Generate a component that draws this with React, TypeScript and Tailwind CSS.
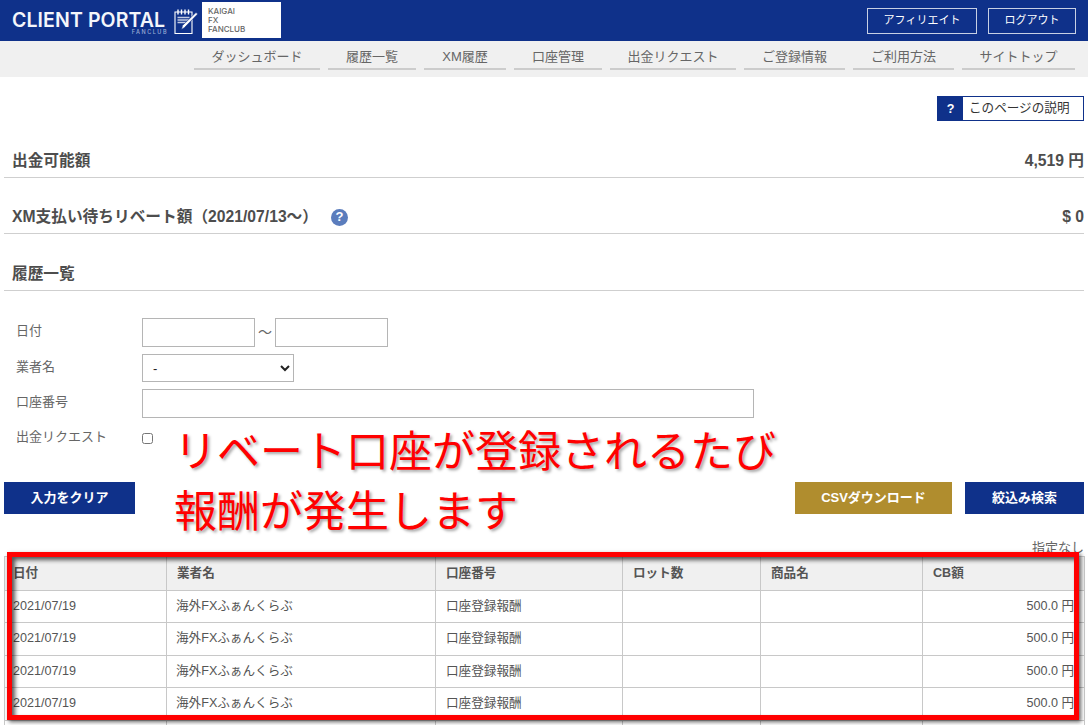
const navItems = [
  { label: 'ダッシュボード', width: 'w-[126px]' },
  { label: '履歴一覧', width: 'w-[88px]' },
  { label: 'XM履歴', width: 'w-[82px]' },
  { label: '口座管理', width: 'w-[88px]' },
  { label: '出金リクエスト', width: 'w-[126px]' },
  { label: 'ご登録情報', width: 'w-[101px]' },
  { label: 'ご利用方法', width: 'w-[101px]' },
  { label: 'サイトトップ', width: 'w-[113px]' },
];

const rows = [0, 1, 2, 3, 4];
const rowHeights = ['h-[32px]', 'h-[33px]', 'h-[32px]', 'h-[33px]', 'h-[33px]'];

const NotebookIcon = () => (
  <svg width="26" height="28" viewBox="0 0 26 28" fill="none" stroke="white" strokeWidth="1.1">
    <path d="M2 5h17v21.5H2z" />
    <path d="M5 2.5v5M8.5 2.5v5M12 2.5v5M15.5 2.5v5" strokeWidth="1.4" />
    <path d="M4.5 10.5h12M4.5 13h12M4.5 15.5h9" strokeWidth="1.4" opacity="0.75" />
    <path d="M8.5 22.5l1-4L23 5.5l1.7 1.5L11.5 20.5z" fill="white" stroke="#0f318a" strokeWidth="0.6" />
  </svg>
);

const Section = ({ title, value, help }: { title: string; value?: string; help?: boolean }) => (
  <div className="flex h-[42px] items-end justify-between border-b border-[#cfcfcf] pb-[5px] pl-2 text-[15.7px] font-bold leading-[22px] text-[#4d4d4d]">
    <div className="flex items-center">
      <span>{title}</span>
      {help && (
        <span className="ml-[13px] flex h-[17px] w-[17px] items-center justify-center rounded-full bg-[#5b7dbd] text-[13px] font-bold text-white">
          ?
        </span>
      )}
    </div>
    {value && <span>{value}</span>}
  </div>
);

export default function App() {
  return (
    <div className="relative h-[725px] w-[1088px] overflow-hidden bg-white font-['Liberation_Sans','Noto_Sans_CJK_JP',sans-serif] text-[#555]">
      <header className="flex h-[41px] items-center bg-[#0f318a] pl-3 pr-3">
        <div className="relative w-[160px] font-['Inter',sans-serif] text-[19.5px] font-semibold leading-none tracking-[0.1px] text-[#f4f6fb]">
          CLIENT PORTAL
          <span className="absolute right-[4px] top-[19px] text-[5.5px] font-medium tracking-[1.5px] text-[#9fb0d8]">FANCLUB</span>
        </div>
        <div className="ml-[1px]">
          <NotebookIcon />
        </div>
        <div className="ml-[3px] mt-[-1px] flex h-[36px] w-[79px] flex-col justify-center bg-white pl-[6px] font-['Inter',sans-serif] text-[8px] font-medium leading-[9px] text-[#666]">
          <span>KAIGAI</span>
          <span>FX</span>
          <span>FANCLUB</span>
        </div>
        <div className="ml-auto flex gap-[11px]">
          <button className="h-[26px] w-[110px] border border-[#c8d0e4] text-[11px] text-white">アフィリエイト</button>
          <button className="h-[26px] w-[88px] border border-[#c8d0e4] text-[11px] text-white">ログアウト</button>
        </div>
      </header>

      <nav className="flex h-[36px] justify-end gap-[8px] bg-[#f0f0f0] pr-[13px]">
        {navItems.map((item) => (
          <a key={item.label} className={`${item.width} mt-[1px] h-[28px] border-b-[2px] border-[#cccccc] text-center text-[13px] leading-[30px] text-[#666]`}>
            {item.label}
          </a>
        ))}
      </nav>

      <main className="px-1">
        <div className="flex justify-end pt-[19px]">
          <a className="flex h-[25px] w-[147px] items-center border border-[#0f318a] text-[12.6px] leading-[20px] text-[#333]">
            <span className="flex h-full w-[25px] items-center justify-center bg-[#0f318a] font-bold text-white">?</span>
            <span className="ml-[6px] mb-[2px]">このページの説明</span>
          </a>
        </div>

        <div className="mt-[15px]">
          <Section title="出金可能額" value="4,519 円" />
        </div>
        <div className="mt-[14px]">
          <Section title="XM支払い待ちリベート額（2021/07/13～）" value="$ 0" help />
        </div>
        <div className="mt-[15px]">
          <Section title="履歴一覧" />
        </div>

        <form className="mt-[27px] text-[13px] text-[#666]">
          <div className="flex h-[29px] items-center">
            <label className="mb-[3px] w-[138px] pl-3">日付</label>
            <input className="h-[29px] w-[113px] border border-[#b5b5b5]" />
            <span className="w-[20px] text-center text-[14px]">～</span>
            <input className="h-[29px] w-[113px] border border-[#b5b5b5]" />
          </div>
          <div className="mt-[7px] flex h-[28px] items-center">
            <label className="mb-[2px] w-[138px] pl-3">業者名</label>
            <select className="h-[28px] w-[152px] border border-[#b5b5b5] bg-white pl-[6px] text-[13px] text-[#222]">
              <option>-</option>
            </select>
          </div>
          <div className="mt-[7px] flex h-[29px] items-center">
            <label className="mb-[3px] w-[138px] pl-3">口座番号</label>
            <input className="h-[29px] w-[612px] border border-[#b5b5b5]" />
          </div>
          <div className="mt-[15px] flex h-[11px] items-center">
            <label className="mb-[3px] w-[138px] pl-3">出金リクエスト</label>
            <input type="checkbox" className="m-0 h-[11px] w-[11px]" />
          </div>
        </form>

        <div className="mt-[38px] flex h-[32px] text-[13px] font-bold text-white">
          <button className="w-[131px] bg-[#0f318a]">入力をクリア</button>
          <button className="ml-auto w-[157px] bg-[#b08d2e]">CSVダウンロード</button>
          <button className="ml-[13px] w-[119px] bg-[#0f318a]">絞込み検索</button>
        </div>

        <div className="mt-[26px] h-[16px] text-right text-[13px] leading-[16px] text-[#666]">指定なし</div>

        <table className="w-[1080px] table-fixed border-collapse text-[12.6px] text-[#555]">
          <colgroup>
            <col className="w-[162px]" />
            <col className="w-[269px]" />
            <col className="w-[187px]" />
            <col className="w-[138px]" />
            <col className="w-[162px]" />
            <col className="w-[162px]" />
          </colgroup>
          <thead>
            <tr className="h-[34px] bg-[#f0f0f0] font-bold">
              <th className="border border-[#c8c8c8] pb-[1px] pl-[8px] text-left">日付</th>
              <th className="border border-[#c8c8c8] pb-[1px] pl-[10px] text-left">業者名</th>
              <th className="border border-[#c8c8c8] pb-[1px] pl-[10px] text-left">口座番号</th>
              <th className="border border-[#c8c8c8] pb-[1px] pl-[10px] text-left">ロット数</th>
              <th className="border border-[#c8c8c8] pb-[1px] pl-[10px] text-left">商品名</th>
              <th className="border border-[#c8c8c8] pb-[1px] pl-[10px] text-left">CB額</th>
            </tr>
          </thead>
          <tbody>
            {rows.map((row) => (
              <tr key={row} className={rowHeights[row]}>
                <td className="border border-[#c8c8c8] pb-[1px] pl-[8px]">2021/07/19</td>
                <td className="border border-[#c8c8c8] pb-[1px] pl-[9px]">海外FXふぁんくらぶ</td>
                <td className="border border-[#c8c8c8] pb-[1px] pl-[10px]">口座登録報酬</td>
                <td className="border border-[#c8c8c8]"></td>
                <td className="border border-[#c8c8c8]"></td>
                <td className="border border-[#c8c8c8] pb-[1px] pr-[10px] text-right">500.0 円</td>
              </tr>
            ))}
          </tbody>
        </table>
      </main>

      {/* annotation drawn over the page */}
      <div className="pointer-events-none absolute left-[174px] top-[418px] font-['Noto_Sans_CJK_JP',sans-serif] text-[43px] leading-[60px] text-[#ff0000] [text-shadow:2px_2px_3px_rgba(0,0,0,0.35)]">
        <div>リベート口座が登録されるたび</div>
        <div>報酬が発生します</div>
      </div>
      <div className="pointer-events-none absolute left-[7px] top-[552px] h-[168px] w-[1072px] border-[5px] border-[#ff0000] shadow-[2px_2px_4px_rgba(0,0,0,0.6),inset_3px_3px_4px_rgba(0,0,0,0.65)]"></div>
    </div>
  );
}
